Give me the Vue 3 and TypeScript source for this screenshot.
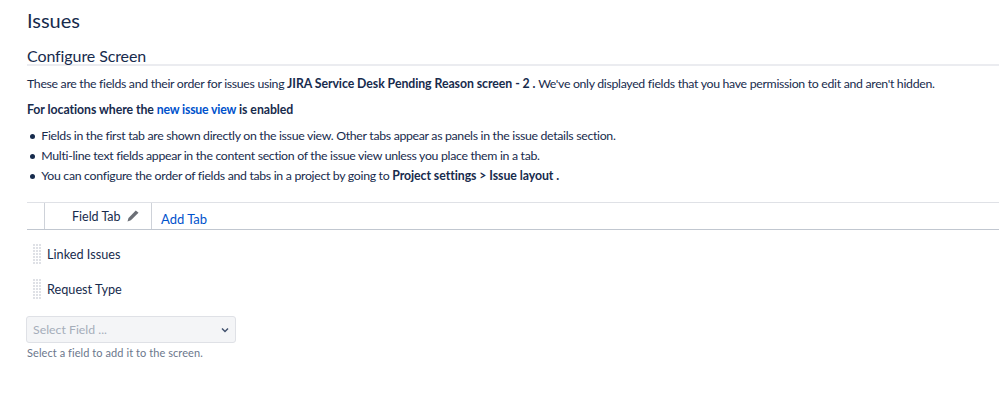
<script setup lang="ts">
const bullets = [
  'Fields in the first tab are shown directly on the issue view. Other tabs appear as panels in the issue details section.',
  'Multi-line text fields appear in the content section of the issue view unless you place them in a tab.',
]
const fields = ['Linked Issues', 'Request Type']
const dots = Array.from({ length: 21 })
</script>

<template>
  <main class="page">
    <h1>Issues</h1>
    <h2>Configure Screen</h2>
    <p class="intro">These are the fields and their order for issues using <b>JIRA Service Desk Pending Reason screen - 2 .</b> We've only displayed fields that you have permission to edit and aren't hidden.</p>
    <p class="locations"><b>For locations where the <a href="#">new issue view</a> is enabled</b></p>
    <ul>
      <li v-for="b in bullets" :key="b">{{ b }}</li>
      <li>You can configure the order of fields and tabs in a project by going to <b>Project settings &gt; Issue layout .</b></li>
    </ul>
    <div class="tabs">
      <div class="tab">
        <span>Field Tab</span>
        <svg width="12" height="12" viewBox="0 0 12 12"><path d="M8.800.4 11.500 2.800 3.900 10.300.5 11.500 1.500 8z" fill="#6b6f76"/></svg>
      </div>
      <a class="add" href="#">Add Tab</a>
    </div>
    <div v-for="f in fields" :key="f" class="row">
      <div class="grip"><i v-for="(_, i) in dots" :key="i"></i></div>
      <span>{{ f }}</span>
    </div>
    <div class="select">
      <span>Select Field ...</span>
      <svg width="8" height="6" viewBox="0 0 8 6"><path d="M1 1.500 4 4.500 7 1.500" fill="none" stroke="#42526e" stroke-width="1.500"/></svg>
    </div>
    <div class="hint">Select a field to add it to the screen.</div>
  </main>
</template>

<style>
html, body { background: #fff; overflow: hidden; }
</style>

<style scoped>
.page { width: 999px; height: 418px; box-sizing: border-box; padding: 8px 0 0 27px; overflow: hidden; font-family: Lato, "Open Sans", sans-serif; font-size: 12.300px; line-height: 20px; letter-spacing: -.31px; color: #172b4d; }
h1 { margin: 0; font-size: 20px; font-weight: 400; line-height: 24px; letter-spacing: 0; }
h2 { margin: 12px 0 0; font-size: 16px; font-weight: 400; line-height: 24px; border-bottom: 2px solid #ebecf0; height: 20px; letter-spacing: -.1px; }
p { margin: 0; white-space: nowrap; }
.intro { margin-top: 8px; }
.locations { margin-top: 6px; }
b { font-weight: 700; letter-spacing: -.06px; }
a { color: #0052cc; text-decoration: none; }
b a { letter-spacing: -.2px; }
ul { margin: 6px 0 0; padding: 0 0 0 3px; list-style: none; }
li { white-space: nowrap; }
li::before { content: ""; display: inline-block; width: 5px; height: 5px; margin-right: 6.300px; border-radius: 50%; background: #172b4d; vertical-align: 1px; }
.tabs { display: flex; box-sizing: border-box; margin-top: 16px; height: 28px; border-top: 1px solid #dfe1e6; border-bottom: 1px solid #c1c7d0; padding-left: 17px; }
.tab { display: flex; align-items: center; gap: 6px; box-sizing: border-box; width: 108px; height: 26px; padding: 2px 0 0 27px; background: #fff; border: 1px solid #ced2d9; border-width: 0 1px; font-size: 12.500px; letter-spacing: 0; }
.tab svg { margin-top: -3px; }
.add { padding: 6px 0 0 9px; font-size: 13px; letter-spacing: 0; }
.row { display: flex; align-items: center; gap: 6px; height: 21px; margin-top: 13px; font-size: 12.700px; letter-spacing: 0; }
.row + .row { margin-top: 14px; }
.grip { display: grid; grid-template-columns: repeat(3, 2px); grid-auto-rows: 2px; gap: 1px; width: 8px; margin-left: 6px; height: 20px; }
.grip i { background: #dfe1e6; }
.select { display: flex; align-items: center; justify-content: space-between; box-sizing: border-box; width: 210px; height: 27px; margin: 17px 0 0 -1px; padding: 0 6px 0 6px; background: #f4f5f7; border: 1px solid #dfe1e6; border-radius: 3px; color: #a5adba; letter-spacing: 0; }
.hint { margin-top: 2px; font-size: 11px; line-height: 16px; color: #6b778c; letter-spacing: .07px; }
</style>
